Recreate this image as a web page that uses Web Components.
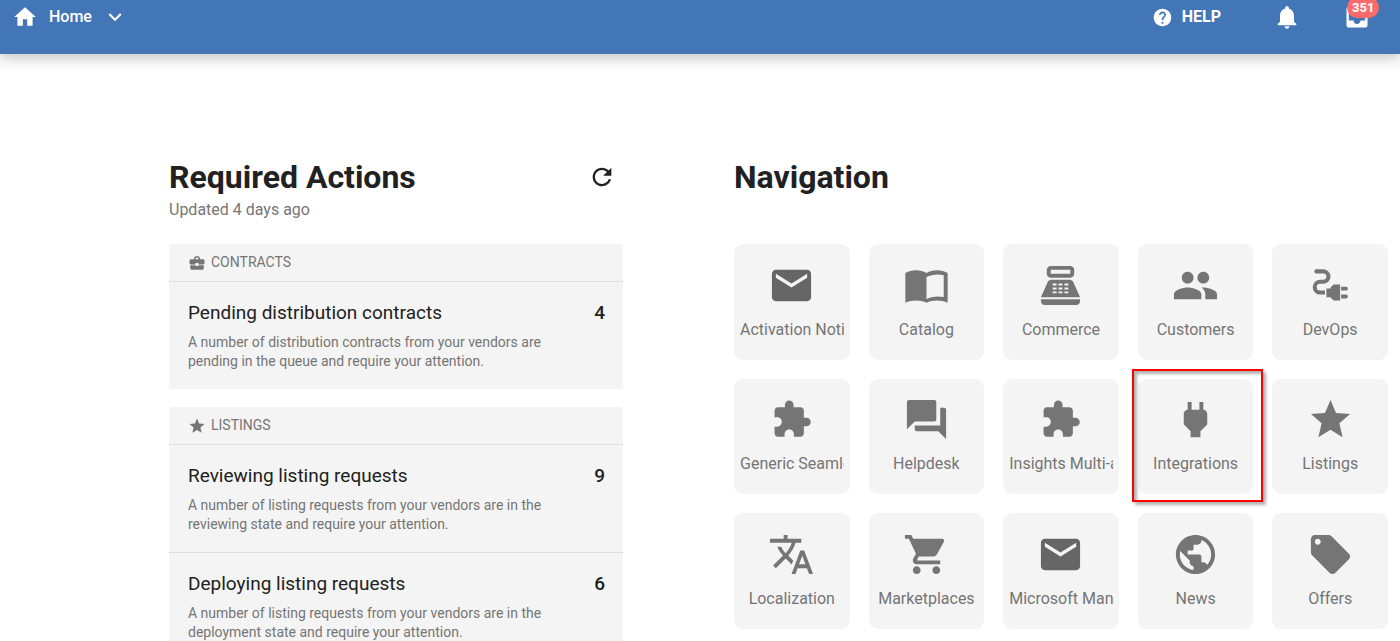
<!DOCTYPE html>
<html lang="en">
<head>
<meta charset="utf-8">
<meta name="viewport" content="width=device-width, initial-scale=1">
<title>Home</title>
<style>
  body {
    margin: 0;
    background: #fff;
    color: #212121;
    font: 16px/24px Roboto, "Liberation Sans", sans-serif;
  }

  main {
    display: grid;
    grid-template-columns: minmax(0, 454fr) minmax(0, 654fr);
    gap: 111px;
    align-items: start;
    padding: 102px 12px 18px 169px;
  }
</style>
</head>
<body>

<app-header count="351">Home</app-header>

<main>
  <page-section heading="Required Actions">
    <span slot="note">Updated 4 days ago</span>
    <icon-button slot="action" icon="refresh" label="Refresh"></icon-button>

    <action-card icon="briefcase" heading="Contracts">
      <action-item heading="Pending distribution contracts" count="4">A number of distribution contracts from your vendors are pending in the queue and require your attention.</action-item>
    </action-card>

    <action-card icon="star" heading="Listings">
      <action-item heading="Reviewing listing requests" count="9">A number of listing requests from your vendors are in the reviewing state and require your attention.</action-item>
      <action-item heading="Deploying listing requests" count="6">A number of listing requests from your vendors are in the deployment state and require your attention.</action-item>
    </action-card>
  </page-section>

  <page-section heading="Navigation">
    <tile-grid>
      <nav-tile icon="mail">Activation Notice</nav-tile>
      <nav-tile icon="book">Catalog</nav-tile>
      <nav-tile icon="register">Commerce</nav-tile>
      <nav-tile icon="people">Customers</nav-tile>
      <nav-tile icon="cable">DevOps</nav-tile>
      <nav-tile icon="puzzle">Generic Seamless</nav-tile>
      <nav-tile icon="chat">Helpdesk</nav-tile>
      <nav-tile icon="puzzle">Insights Multi-app</nav-tile>
      <nav-tile icon="plug" marked>Integrations</nav-tile>
      <nav-tile icon="star">Listings</nav-tile>
      <nav-tile icon="translate">Localization</nav-tile>
      <nav-tile icon="cart">Marketplaces</nav-tile>
      <nav-tile icon="mail">Microsoft Manager</nav-tile>
      <nav-tile icon="globe">News</nav-tile>
      <nav-tile icon="tag">Offers</nav-tile>
    </tile-grid>
  </page-section>
</main>

<script>
const ICONS = {
  home: `<path d="M10 20v-6h4v6h5v-8h3L12 3 2 12h3v8z"/>`,
  chevron: `<path d="M16.59 8.59 12 13.17 7.41 8.59 6 10l6 6 6-6z"/>`,
  help: `<path d="M12 2C6.48 2 2 6.48 2 12s4.48 10 10 10 10-4.48 10-10S17.52 2 12 2zm1 17h-2v-2h2v2zm2.07-7.75l-.9.92C13.45 12.9 13 13.5 13 15h-2v-.5c0-1.1.45-2.1 1.17-2.83l1.24-1.26c.37-.36.59-.86.59-1.41 0-1.1-.9-2-2-2s-2 .9-2 2H8c0-2.21 1.79-4 4-4s4 1.79 4 4c0 .88-.36 1.68-.93 2.25z"/>`,
  bell: `<path d="M12 22c1.1 0 2-.9 2-2h-4c0 1.1.89 2 2 2zm6-6v-5c0-3.07-1.64-5.64-4.5-6.32V4c0-.83-.67-1.5-1.5-1.5s-1.5.67-1.5 1.5v.68C7.63 5.36 6 7.92 6 11v5l-2 2v1h16v-1l-2-2z"/>`,
  inbox: `<path d="M19 3H4.99c-1.11 0-1.98.89-1.98 2L3 19c0 1.1.88 2 1.99 2H19c1.1 0 2-.9 2-2V5c0-1.11-.9-2-2-2zm0 12h-4c0 1.66-1.35 3-3 3s-3-1.34-3-3H4.99V5H19v10z"/>`,
  refresh: `<path d="M17.65 6.35C16.2 4.9 14.21 4 12 4c-4.42 0-7.99 3.58-7.99 8s3.57 8 7.99 8c3.73 0 6.84-2.55 7.73-6h-2.08c-.82 2.33-3.04 4-5.65 4-3.31 0-6-2.69-6-6s2.69-6 6-6c1.66 0 3.14.69 4.22 1.78L13 11h7V4l-2.35 2.35z"/>`,
  briefcase: `<path d="M10 16v-1H3.01L3 19c0 1.11.89 2 2 2h14c1.11 0 2-.89 2-2v-4h-7v1h-4zm10-9h-4.01V5l-2-2h-4l-2 2v2H4c-1.1 0-2 .9-2 2v3c0 1.11.89 2 2 2h6v-2h4v2h6c1.1 0 2-.9 2-2V9c0-1.1-.9-2-2-2zm-6 0h-4V5h4v2z"/>`,
  star: `<path d="M12 17.27L18.18 21l-1.64-7.03L22 9.24l-7.19-.61L12 2 9.19 8.63 2 9.24l5.46 4.73L5.82 21z"/>`,
  mail: `<path d="M20 4H4c-1.1 0-1.99.9-1.99 2L2 18c0 1.1.9 2 2 2h16c1.1 0 2-.9 2-2V6c0-1.1-.9-2-2-2zm0 4l-8 5-8-5V6l8 5 8-5v2z"/>`,
  book: `<path fill-rule="evenodd" d="M1.2 5.6C4.4 3.7 9 3.7 12 5.6c3-1.9 7.6-1.9 10.8 0v15.2c-3.2-1.6-7.8-1.6-10.8 0-3-1.6-7.6-1.6-10.8 0zM12 7.7v11.2c2.5-1.3 6-1.7 8.8-1V6.8C18 6 14.5 6.4 12 7.7z"/>`,
  register: `<path fill-rule="evenodd" d="M17 2H7c-1.1 0-2 .9-2 2v2c0 1.1.9 2 2 2h10c1.1 0 2-.9 2-2V4c0-1.1-.9-2-2-2zm0 4H7V4h10v2zM20 22H4c-1.1 0-2-.9-2-2v-1h20v1c0 1.1-.9 2-2 2zM18.53 10.19C18.21 9.47 17.49 9 16.7 9H7.3c-.79 0-1.51.47-1.83 1.19L2 18h20zM8 11h2v1H8zM11 11h2v1h-2zM14 11h2v1h-2zM8 13h2v1H8zM11 13h2v1h-2zM14 13h2v1h-2zM8 15h2v1H8zM11 15h2v1h-2zM14 15h2v1h-2z"/>`,
  people: `<path d="M16 11c1.66 0 2.99-1.34 2.99-3S17.66 5 16 5c-1.66 0-3 1.34-3 3s1.34 3 3 3zm-8 0c1.66 0 2.99-1.34 2.99-3S9.66 5 8 5C6.34 5 5 6.34 5 8s1.34 3 3 3zm0 2c-2.33 0-7 1.17-7 3.5V19h14v-2.5c0-2.33-4.67-3.5-7-3.5zm8 0c-.29 0-.62.02-.97.05 1.16.84 1.97 1.97 1.97 3.45V19h6v-2.5c0-2.33-4.67-3.5-7-3.5z"/>`,
  cable: `<path d="M4.8 4.800h3.500a2.650 2.650 0 0 1 0 5.300H6.700a2.750 2.750 0 0 0 0 5.500h2.500" fill="none" stroke="currentColor" stroke-width="2.100"/><circle cx="4.800" cy="4.800" r="1.050"/><path d="M9.900 13.500h2.200v-.6l1.500-1.400h3.300v8.200h-3.300l-1.500-1.400V18H9.900zM17.400 12.600h2.500a1 1 0 0 1 0 2h-2.500zM17.400 16.600h2.500a1 1 0 0 1 0 2h-2.500z"/>`,
  puzzle: `<path transform="translate(1.6 1.4) scale(.88)" d="M20.5 11H19V7c0-1.1-.9-2-2-2h-4V3.5C13 2.12 11.88 1 10.5 1S8 2.12 8 3.5V5H4c-1.1 0-1.99.9-1.99 2v3.8H3.5c1.49 0 2.7 1.21 2.7 2.7s-1.21 2.7-2.7 2.7H2V20c0 1.1.9 2 2 2h3.8v-1.5c0-1.49 1.21-2.7 2.7-2.7 1.49 0 2.7 1.21 2.7 2.7V22H17c1.1 0 2-.9 2-2v-4h1.5c1.38 0 2.5-1.12 2.5-2.5S21.88 11 20.5 11z"/>`,
  chat: `<path d="M21 6h-2v9H6v2c0 .55.45 1 1 1h11l4 4V7c0-.55-.45-1-1-1zm-4 6V3c0-.55-.45-1-1-1H3c-.55 0-1 .45-1 1v14l4-4h10c.55 0 1-.45 1-1z"/>`,
  plug: `<path d="M16.01 7L16 3h-2v4h-4V3H8v4h-.01C7 6.99 6 7.99 6 8.99v5.49L9.5 18v3h5v-3l3.5-3.51v-5.5c0-1-1-2-1.99-1.99z"/>`,
  translate: `<path d="M12.87 15.07l-2.54-2.51.03-.03c1.74-1.94 2.98-4.17 3.71-6.53H17V4h-7V2H8v2H1v1.99h11.17C11.5 7.92 10.44 9.75 9 11.35 8.07 10.32 7.3 9.19 6.69 8h-2c.73 1.63 1.73 3.17 2.98 4.56l-5.09 5.02L4 19l5-5 3.11 3.11.76-2.04zM18.5 10h-2L12 22h2l1.12-3h4.75L21 22h2l-4.5-12zm-2.62 7l1.62-4.33L19.12 17h-3.24z"/>`,
  cart: `<path d="M7 18c-1.1 0-1.99.9-1.99 2S5.9 22 7 22s2-.9 2-2-.9-2-2-2zM1 2v2h2l3.6 7.59-1.35 2.45c-.16.28-.25.61-.25.96 0 1.1.9 2 2 2h12v-2H7.42c-.14 0-.25-.11-.25-.25l.03-.12.9-1.63h7.45c.75 0 1.41-.41 1.75-1.03l3.58-6.49c.08-.14.12-.31.12-.48 0-.55-.45-1-1-1H5.21l-.94-2H1zm16 16c-1.1 0-1.99.9-1.99 2s.89 2 1.99 2 2-.9 2-2-.9-2-2-2z"/>`,
  globe: `<path d="M12 2C6.48 2 2 6.48 2 12s4.48 10 10 10 10-4.48 10-10S17.52 2 12 2zm-1 17.93c-3.95-.49-7-3.85-7-7.93 0-.62.08-1.21.21-1.79L9 15v1c0 1.1.9 2 2 2v1.93zm6.9-2.54c-.26-.81-1-1.39-1.9-1.39h-1v-3c0-.55-.45-1-1-1H8v-2h2c.55 0 1-.45 1-1V7h2c1.1 0 2-.9 2-2v-.41c2.93 1.19 5 4.06 5 7.41 0 2.08-.8 3.97-2.1 5.39z"/>`,
  tag: `<path d="M21.41 11.58l-9-9C12.05 2.22 11.55 2 11 2H4c-1.1 0-2 .9-2 2v7c0 .55.22 1.05.59 1.42l9 9c.36.36.86.58 1.41.58.55 0 1.05-.22 1.41-.59l7-7c.37-.36.59-.86.59-1.41 0-.55-.23-1.06-.59-1.42zM5.5 7C4.67 7 4 6.33 4 5.5S4.67 4 5.5 4 7 4.67 7 5.5 6.33 7 5.5 7z"/>`
};

class UiIcon extends HTMLElement {
  constructor() {
    super();
    this.attachShadow({ mode: "open" });
  }

  connectedCallback() {
    this.shadowRoot.innerHTML = `
      <style>
        :host {
          display: block;
          flex: none;
          width: var(--icon-size, 24px);
          height: var(--icon-size, 24px);
        }

        svg {
          display: block;
          width: 100%;
          height: 100%;
          fill: currentColor;
        }
      </style>
      <svg viewBox="0 0 24 24" aria-hidden="true">${ICONS[this.getAttribute("name")]}</svg>
    `;
  }
}

class IconButton extends HTMLElement {
  constructor() {
    super();
    this.attachShadow({ mode: "open" });
  }

  connectedCallback() {
    this.shadowRoot.innerHTML = `
      <style>
        :host {
          display: block;
          position: relative;
          --icon-size: 28px;
        }

        button {
          display: block;
          padding: 0;
          border: 0;
          background: none;
          color: inherit;
          cursor: pointer;
        }
      </style>
      <button type="button" aria-label="${this.getAttribute("label")}">
        <ui-icon name="${this.getAttribute("icon")}"></ui-icon>
      </button>
      <slot></slot>
    `;
  }
}

class AppHeader extends HTMLElement {
  constructor() {
    super();
    this.attachShadow({ mode: "open" });
  }

  connectedCallback() {
    this.shadowRoot.innerHTML = `
      <style>
        :host {
          display: block;
          background: #4276b6;
          color: #fff;
          box-shadow: 0 4px 14px rgba(0, 0, 0, 0.24);
        }

        header {
          display: flex;
          align-items: center;
          justify-content: space-between;
          padding: 3px 29px 23px 12px;
        }

        nav, .tools {
          display: flex;
          align-items: center;
        }

        .tools {
          gap: 42px;
        }

        button, a {
          display: flex;
          align-items: center;
          padding: 0;
          border: 0;
          background: none;
          color: inherit;
          font: inherit;
          font-weight: 500;
          text-decoration: none;
          cursor: pointer;
        }

        nav {
          --icon-size: 26px;
        }

        nav button {
          gap: 10px;
          margin-left: 11px;
        }

        .help {
          --icon-size: 21px;
          gap: 9px;
          margin-right: 10px;
          font-weight: 700;
        }

        .badge {
          position: absolute;
          top: -6px;
          left: 4px;
          padding: 0 5px;
          border-radius: 11px;
          background: #ff6b6b;
          font-size: 13px;
          font-weight: 700;
          line-height: 21px;
        }
      </style>
      <header>
        <nav aria-label="Main">
          <a href="#home" aria-label="Home page"><ui-icon name="home"></ui-icon></a>
          <button type="button"><slot></slot><ui-icon name="chevron"></ui-icon></button>
        </nav>
        <div class="tools">
          <a class="help" href="#help"><ui-icon name="help"></ui-icon>HELP</a>
          <icon-button icon="bell" label="Notifications"></icon-button>
          <icon-button icon="inbox" label="Inbox"><span class="badge">${this.getAttribute("count")}</span></icon-button>
        </div>
      </header>
    `;
  }
}

class PageSection extends HTMLElement {
  constructor() {
    super();
    this.attachShadow({ mode: "open" });
  }

  connectedCallback() {
    this.shadowRoot.innerHTML = `
      <style>
        :host {
          display: block;
        }

        .head {
          min-height: 66px;
          margin-bottom: 22px;
          color: #757575;
        }

        .title {
          display: flex;
          align-items: center;
          justify-content: space-between;
          padding-right: 7px;
          color: #212121;
        }

        h1 {
          margin: 0;
          font-size: 32px;
          font-weight: 700;
          line-height: 42px;
        }

        .body {
          display: flex;
          flex-direction: column;
          gap: 18px;
        }
      </style>
      <section>
        <div class="head">
          <div class="title">
            <h1>${this.getAttribute("heading")}</h1>
            <slot name="action"></slot>
          </div>
          <slot name="note"></slot>
        </div>
        <div class="body"><slot></slot></div>
      </section>
    `;
  }
}

class ActionCard extends HTMLElement {
  constructor() {
    super();
    this.attachShadow({ mode: "open" });
  }

  connectedCallback() {
    this.shadowRoot.innerHTML = `
      <style>
        :host {
          display: block;
          border-radius: 4px;
          background: #f4f4f4;
        }

        h2 {
          display: flex;
          align-items: center;
          gap: 5px;
          margin: 0;
          padding: 0 19px;
          color: #757575;
          font-size: 14px;
          font-weight: 400;
          line-height: 37px;
          text-transform: uppercase;
          --icon-size: 18px;
        }

        ::slotted(action-item) {
          border-top: 1px solid #dedede;
        }
      </style>
      <h2><ui-icon name="${this.getAttribute("icon")}"></ui-icon>${this.getAttribute("heading")}</h2>
      <slot></slot>
    `;
  }
}

class ActionItem extends HTMLElement {
  constructor() {
    super();
    this.attachShadow({ mode: "open" });
  }

  connectedCallback() {
    this.shadowRoot.innerHTML = `
      <style>
        :host {
          display: block;
        }

        a {
          display: flex;
          justify-content: space-between;
          gap: 24px;
          padding: 18px 18px 18px 19px;
          color: inherit;
          text-decoration: none;
        }

        h3, .count {
          margin: 0;
          font-size: 19px;
          font-weight: 400;
          line-height: 25px;
        }

        .count {
          font-weight: 500;
        }

        p {
          margin: 8px 0 0;
          color: #757575;
          font-size: 14px;
          line-height: 19px;
        }
      </style>
      <a href="#actions">
        <div>
          <h3>${this.getAttribute("heading")}</h3>
          <p><slot></slot></p>
        </div>
        <span class="count">${this.getAttribute("count")}</span>
      </a>
    `;
  }
}

class TileGrid extends HTMLElement {
  constructor() {
    super();
    this.attachShadow({ mode: "open" });
  }

  connectedCallback() {
    this.shadowRoot.innerHTML = `
      <style>
        :host {
          display: grid;
          grid-template-columns: repeat(5, minmax(0, 1fr));
          gap: 19px;
        }
      </style>
      <slot></slot>
    `;
  }
}

class NavTile extends HTMLElement {
  constructor() {
    super();
    this.attachShadow({ mode: "open" });
  }

  connectedCallback() {
    this.shadowRoot.innerHTML = `
      <style>
        :host {
          display: block;
          position: relative;
          aspect-ratio: 1;
          --icon-size: 47px;
        }

        a {
          display: flex;
          flex-direction: column;
          align-items: center;
          justify-content: center;
          gap: 9px;
          box-sizing: border-box;
          height: 100%;
          padding: 0 6px;
          border-radius: 9px;
          background: #f4f4f4;
          color: #757575;
          text-decoration: none;
        }

        ui-icon[name="mail"] {
          color: #666;
        }

        .label {
          max-width: 100%;
          overflow: hidden;
          white-space: nowrap;
        }

        /* frame drawn over the tile that is being pointed out */
        :host([marked])::after {
          content: "";
          position: absolute;
          inset: -10px -10px -8px -6px;
          border: 2px solid #f00;
          box-shadow: 3px 3px 3px rgba(0, 0, 0, 0.3), inset 3px 3px 3px rgba(0, 0, 0, 0.3);
          pointer-events: none;
        }
      </style>
      <a href="#${this.getAttribute("icon")}">
        <ui-icon name="${this.getAttribute("icon")}"></ui-icon>
        <span class="label"><slot></slot></span>
      </a>
    `;
  }
}

customElements.define("ui-icon", UiIcon);
customElements.define("icon-button", IconButton);
customElements.define("app-header", AppHeader);
customElements.define("page-section", PageSection);
customElements.define("action-card", ActionCard);
customElements.define("action-item", ActionItem);
customElements.define("tile-grid", TileGrid);
customElements.define("nav-tile", NavTile);
</script>
</body>
</html>
